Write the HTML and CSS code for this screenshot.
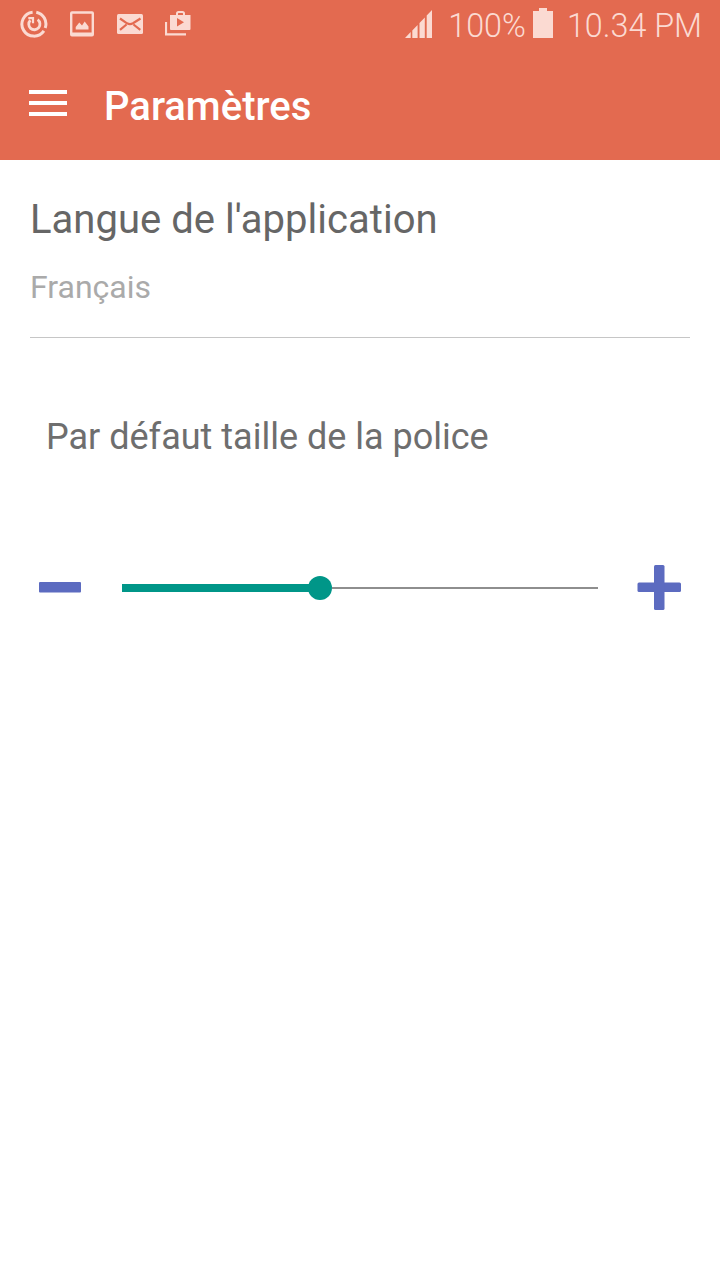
FILE: index.html
```html
<!DOCTYPE html>
<html lang="fr">
<head>
    <meta charset="UTF-8">
    <meta name="viewport" content="width=device-width, initial-scale=1.0">
    <title>Paramètres</title>
    <link rel="stylesheet" href="styles.css">
</head>
<body>

    <div class="status-bar">
        <div class="status-left">
            <svg class="icon" width="28" height="28" viewBox="0 0 28 28" fill="none" stroke="currentColor">
                <path d="M12.6 2.2A12 12 0 1 0 23.9 20.8" stroke-width="3"/>
                <path d="M16.3 2.2A12 12 0 0 1 25.2 18" stroke-width="3"/>
                <path d="M10.4 10.2A5.6 5.6 0 1 0 17.6 9.6" stroke-width="2.8"/>
                <path d="M8.3 8.2H13V13.2" stroke-width="2.2"/>
            </svg>
            <svg class="icon" width="24" height="26" viewBox="0 0 24 26">
                <path fill="currentColor" fill-rule="evenodd" d="M2 0.3H22Q24 0.3 24 2.3V23.5Q24 25.5 22 25.5H2Q0 25.5 0 23.5V2.3Q0 0.3 2 0.3ZM2.4 2.7V21.5H21.6V2.7Z"/>
                <path fill="currentColor" d="M5.7 18.5V16L9.3 11.5L12 14.5L14.7 10.5L18.5 15.5V18.5Z"/>
            </svg>
            <svg class="icon" width="26" height="20" viewBox="0 0 26 20">
                <rect width="26" height="20" rx="1.5" fill="currentColor"/>
                <path d="M3 4.5L10 9.3Q13 11 16 9.3L23.5 4.5M3 15.8L9.5 10.5M23.3 15.8L16.5 10.5" fill="none" stroke="#e36a50" stroke-width="2.2"/>
            </svg>
            <svg class="icon" width="26" height="26" viewBox="0 0 26 26">
                <path d="M1 11V23.3H21" fill="none" stroke="currentColor" stroke-width="2.2"/>
                <path d="M12 5V2.5Q12 1 13.5 1H17.5Q19 1 19 2.5V5" fill="none" stroke="currentColor" stroke-width="2"/>
                <path fill="currentColor" fill-rule="evenodd" d="M5 4H25.5V18Q25.5 19 24.5 19H6Q5 19 5 18ZM12 7V15.5L19 11.2Z"/>
            </svg>
        </div>
        <div class="status-right">
            <svg class="signal" width="28" height="28" viewBox="0 0 28 28" fill="currentColor">
                <path d="M0 28L5.7 22V28ZM7.3 28V20.4L12.6 15V28ZM14.5 28V13L19.8 7.5V28ZM21.7 28V5.5L27 0V28Z"/>
            </svg>
            <span class="percent">100%</span>
            <svg class="battery" width="20" height="30" viewBox="0 0 20 30" fill="currentColor">
                <path d="M6 0H14V3H20V30H0V3H6Z"/>
            </svg>
            <span class="time">10.34 PM</span>
        </div>
    </div>

    <header class="toolbar">
        <button class="menu-btn" type="button" aria-label="Menu">
            <span></span>
            <span></span>
            <span></span>
        </button>
        <h1>Paramètres</h1>
    </header>

    <main class="settings">
        <div class="language">
            <h2>Langue de l'application</h2>
            <p>Français</p>
        </div>

        <div class="font-size">
            <h3>Par défaut taille de la police</h3>
            <div class="slider-row">
                <svg class="minus" width="42" height="12" viewBox="0 0 42 12">
                    <rect width="42" height="10.6" rx="1" fill="#5c6bc0"/>
                </svg>
                <div class="slider">
                    <div class="slider-fill"></div>
                    <div class="slider-thumb"></div>
                    <div class="slider-track"></div>
                </div>
                <svg class="plus" width="44" height="46" viewBox="0 0 44 46" fill="#5c6bc0">
                    <rect x="0.5" y="17.5" width="43.5" height="9.5" rx="1.5"/>
                    <rect x="17" y="0" width="10.5" height="45" rx="1.5"/>
                </svg>
            </div>
        </div>
    </main>

</body>
</html>
```

FILE: styles.css
```css
body {
    margin: 0;
    background-color: #fff;
    font-family: Roboto, "Liberation Sans", sans-serif;
}
h1, h2, h3, p {
    margin: 0;
    font-weight: 400;
    white-space: nowrap;
}
svg {
    display: block;
    flex: none;
}
.status-bar {
    display: flex;
    justify-content: space-between;
    box-sizing: border-box;
    height: 50px;
    padding: 0 18px 0 20px;
    background-color: #e36a50;
    color: #fbdad2;
}
.status-left {
    display: flex;
    align-items: center;
    gap: 22px;
    height: 48px;
}
.status-left .icon:nth-child(3) {
    margin-left: 1px;
}
.status-right {
    display: flex;
    align-items: center;
    height: 51px;
    font-size: 32.3px;
    font-weight: 300;
    white-space: nowrap;
}
.signal {
    margin: 0 15px 3px 0;
}
.battery {
    margin: 0 14px 5px 7px;
}
.toolbar {
    display: flex;
    align-items: center;
    box-sizing: border-box;
    height: 110px;
    padding: 0 29px 0;
    background-color: #e36a50;
    color: #fff;
}
.menu-btn {
    display: flex;
    flex-direction: column;
    gap: 7px;
    width: 38px;
    margin: 0 37px 4px 0;
    padding: 0;
    border: none;
    background: none;
}
.menu-btn span {
    width: 38px;
    height: 4px;
    background-color: #fff;
}
.toolbar h1 {
    padding-top: 4px;
    font-size: 40px;
    font-weight: 500;
    line-height: 48px;
}
.language {
    margin: 0 30px;
    padding: 36px 0 32px;
    border-bottom: 1px solid #c6c6c6;
}
.language h2 {
    color: #666;
    font-size: 40px;
    line-height: 48px;
    letter-spacing: 0.03px;
}
.language p {
    margin-top: 25px;
    color: #aaa;
    font-size: 32px;
    line-height: 36px;
}
.font-size {
    padding: 77px 39px 0;
}
.font-size h3 {
    padding-left: 7px;
    color: #6e6e6e;
    font-size: 36px;
    line-height: 44px;
}
.slider-row {
    display: flex;
    align-items: center;
    height: 46px;
    margin-top: 106px;
}
.slider {
    display: flex;
    flex: 1;
    align-items: center;
    margin: 0 39px 0 41px;
}
.slider-fill {
    width: 187px;
    height: 8px;
    margin-right: -1px;
    background-color: #009688;
}
.slider-thumb {
    width: 24px;
    height: 24px;
    border-radius: 50%;
    background-color: #009688;
}
.slider-track {
    flex: 1;
    height: 2px;
    background-color: #8e8e8e;
}
```
